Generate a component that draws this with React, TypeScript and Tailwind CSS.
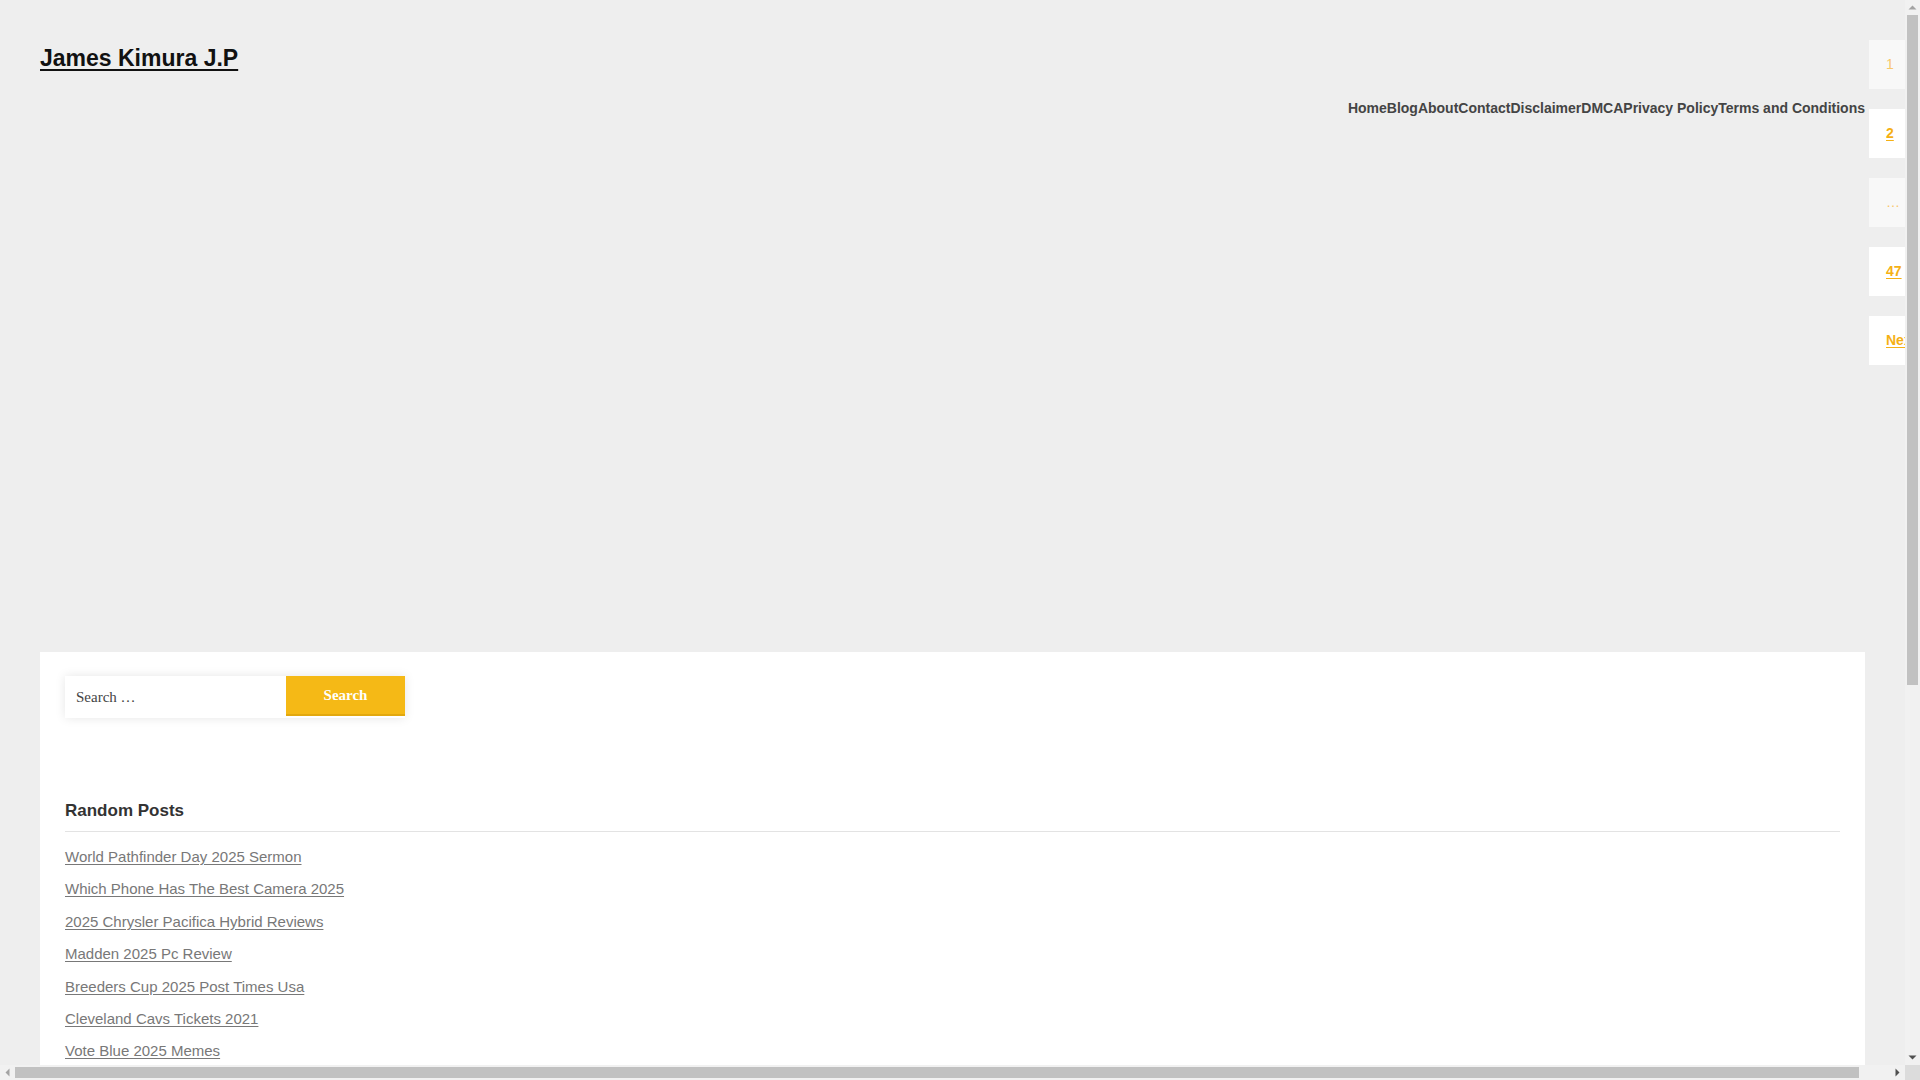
import React from "react";

const navItems = ["Home", "Blog", "About", "Contact", "Disclaimer", "DMCA", "Privacy Policy", "Terms and Conditions"];

const posts = [
  "World Pathfinder Day 2025 Sermon",
  "Which Phone Has The Best Camera 2025",
  "2025 Chrysler Pacifica Hybrid Reviews",
  "Madden 2025 Pc Review",
  "Breeders Cup 2025 Post Times Usa",
  "Cleveland Cavs Tickets 2021",
  "Vote Blue 2025 Memes",
];

const pages: { label: string; link: boolean }[] = [
  { label: "1", link: false },
  { label: "2", link: true },
  { label: "…", link: false },
  { label: "47", link: true },
  { label: "Next", link: true },
];

function Arrow({ dir, color }: { dir: "up" | "down" | "left" | "right"; color: string }) {
  const pts: Record<string, string> = {
    up: "3.5,9.5 7.5,5.5 11.5,9.5",
    down: "3.5,5.5 7.5,9.5 11.5,5.5",
    left: "9.5,3.5 5.5,7.5 9.5,11.5",
    right: "5.5,3.5 9.5,7.5 5.5,11.5",
  };
  return (
    <svg width="15" height="15" viewBox="0 0 15 15" className="shrink-0">
      <polygon points={pts[dir]} fill={color} />
    </svg>
  );
}

function Page() {
  return (
    <div className="flex w-[1937px] min-h-[1645px] bg-[#eeeeee] font-['Liberation_Sans',Arial,sans-serif]">
      <div className="ml-[40px] w-[1825px] shrink-0 flex flex-col">
        <header className="flex flex-col">
          <div className="pt-[45px]">
            <a href="#" className="text-[23px] leading-[27px] font-bold text-[#111111] underline underline-offset-[3px] decoration-[2px]">
              James Kimura J.P
            </a>
          </div>
          <nav className="mt-[25px] flex justify-end">
            {navItems.map((n) => (
              <a key={n} href="#" className="text-[14px] leading-[20px] font-bold text-[#444444]">
                {n}
              </a>
            ))}
          </nav>
        </header>
        <main className="mt-[534px] bg-white px-[25px] pt-[24px] pb-[520px] flex-1">
          <form className="flex w-[340px] h-[42px] shadow-[0_0_10px_rgba(0,0,0,0.10)]">
            <input
              type="search"
              placeholder="Search …"
              className="w-[221px] h-[42px] bg-white pl-[11px] text-[15px] font-['Liberation_Serif',serif] text-[#444] placeholder:text-[#444] outline-none"
            />
            <button
              type="button"
              className="w-[119px] h-[40px] bg-[#f5b916] border-b-[2px] border-[#e2a80e] text-white text-[15px] font-bold font-['Liberation_Serif',serif]"
            >
              Search
            </button>
          </form>
          <section className="mt-[81px]">
            <h2 className="text-[17px] leading-[24px] font-bold text-[#333333] pb-[8px] border-b border-[#e3e3e3]">
              Random Posts
            </h2>
            <ul className="mt-[9px]">
              {posts.map((p) => (
                <li key={p} className="py-[5px] text-[15px] leading-[22.4px]">
                  <a href="#" className="text-[#787878] underline underline-offset-[2px]">
                    {p}
                  </a>
                </li>
              ))}
            </ul>
          </section>
        </main>
      </div>
      <div className="ml-[4px] w-[68px] shrink-0 pt-[40px] flex flex-col gap-[20px]">
        {pages.map((p) =>
          p.link ? (
            <a
              key={p.label}
              href="#"
              className="h-[49px] bg-white pl-[17px] flex items-center text-[14px] font-bold text-[#f5b014] underline underline-offset-[2px]"
            >
              {p.label}
            </a>
          ) : (
            <span
              key={p.label}
              className="h-[49px] bg-[#f8f8f8] pl-[17px] flex items-center text-[14px] text-[#f8c76a]"
            >
              {p.label}
            </span>
          )
        )}
      </div>
    </div>
  );
}

export default function App() {
  return (
    <div className="w-[1920px] h-[1080px] flex flex-col overflow-hidden bg-[#eeeeee]">
      <div className="flex h-[1065px]">
        <div className="w-[1905px] h-[1065px] overflow-hidden">
          <Page />
        </div>
        <div className="w-[15px] h-[1065px] bg-[#f1f1f1] flex flex-col">
          <Arrow dir="up" color="#a3a3a3" />
          <div className="mx-[2px] h-[670px] bg-[#c1c1c1]" />
          <div className="flex-1" />
          <Arrow dir="down" color="#505050" />
        </div>
      </div>
      <div className="flex h-[15px]">
        <div className="w-[1905px] h-[15px] bg-[#f1f1f1] flex items-center">
          <Arrow dir="left" color="#a3a3a3" />
          <div className="w-[1844px] h-[11px] bg-[#c1c1c1]" />
          <div className="flex-1" />
          <Arrow dir="right" color="#505050" />
        </div>
        <div className="w-[15px] h-[15px] bg-[#dcdcdc]" />
      </div>
    </div>
  );
}
